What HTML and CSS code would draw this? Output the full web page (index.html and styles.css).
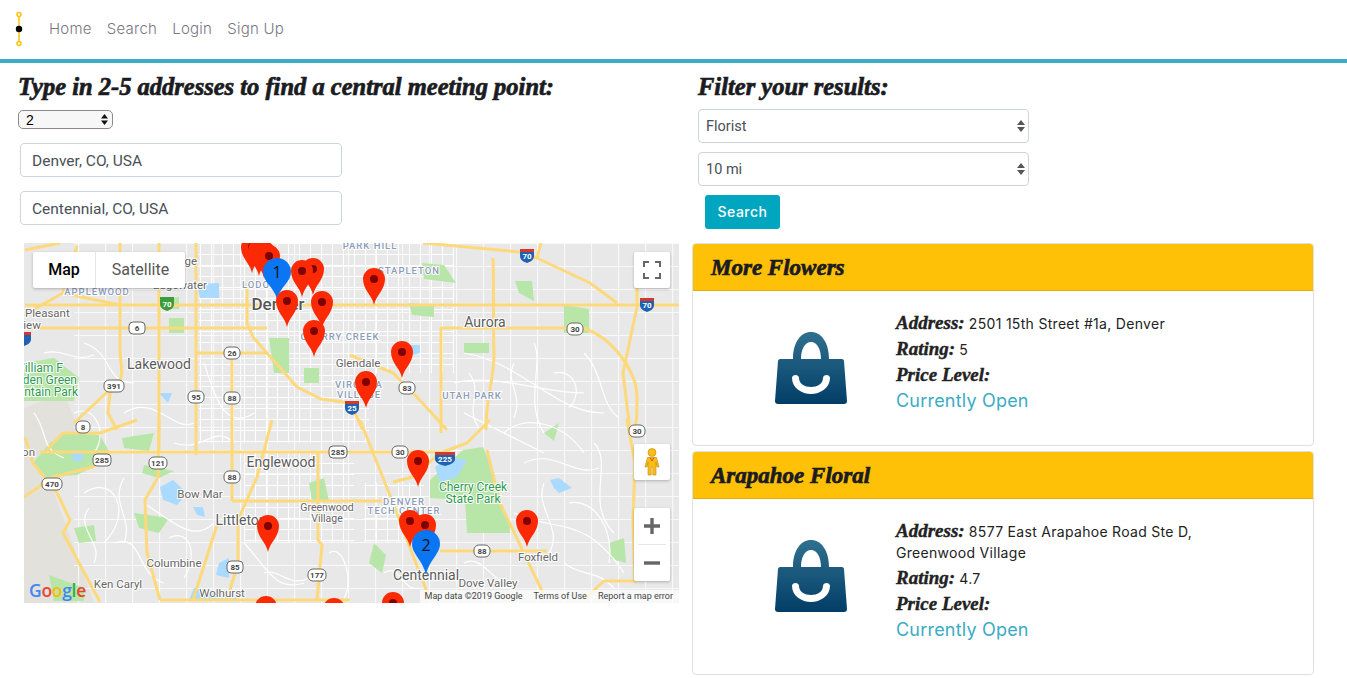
FILE: index.html
```html
<!DOCTYPE html>
<html lang="en">
<head>
<title>Midpoint</title>
<meta charset="utf-8">
<meta name="viewport" content="width=device-width, initial-scale=1">
<link rel="stylesheet" href="styles.css">
</head>
<body>

<header class="topbar">
  <svg class="logo" width="10" height="36" viewBox="0 0 10 36">
    <line x1="5" y1="2" x2="5" y2="34" stroke="#ffc107" stroke-width="1.5"/>
    <circle cx="5" cy="3.5" r="2" fill="#fff" stroke="#ffc107" stroke-width="1.5"/>
    <circle cx="5" cy="32.5" r="2" fill="#fff" stroke="#ffc107" stroke-width="1.5"/>
    <circle cx="5" cy="18" r="3.2" fill="#000"/>
  </svg>
  <nav class="links">
    <a href="#">Home</a>
    <a href="#">Search</a>
    <a href="#">Login</a>
    <a href="#">Sign Up</a>
  </nav>
</header>

<main class="page">
  <section class="left">
    <h2 class="title">Type in 2-5 addresses to find a central meeting point:</h2>
    <div class="count-wrap">
      <select class="count"><option>2</option></select>
      <svg class="arrows" width="7" height="11" viewBox="0 0 7 11"><path d="M3.5 0 7 4.5H0zM3.5 11 0 6.5h7z" fill="#111"/></svg>
    </div>
    <input class="address" type="text" value="Denver, CO, USA">
    <input class="address" type="text" value="Centennial, CO, USA">

    <div class="map">
      <svg class="map-canvas" width="655" height="360" viewBox="0 0 655 360">
        <defs>
          <pattern id="grid-tight" width="11" height="11" patternUnits="userSpaceOnUse">
            <path d="M0 .5H11M.5 0V11" stroke="#fff" stroke-width="1"/>
          </pattern>
          <pattern id="grid-wide" width="27" height="23" patternUnits="userSpaceOnUse">
            <path d="M0 .5H27M.5 0V23" stroke="#fff" stroke-width="1.2" stroke-opacity=".75"/>
          </pattern>
          <path id="pin" d="M0 0C-2-10-11-15-11-26A11 11 0 1 1 11-26C11-15 2-10 0 0Z"/>
          <g id="red-pin">
            <use href="#pin" fill="#fb2a04"/>
            <circle cy="-26" r="4" fill="#7f0000"/>
          </g>
        </defs>

        <rect width="655" height="360" fill="#e8e8e8"/>
        <path d="M0 165 40 150 60 200 30 250 70 360H0Z" fill="#e3e1db"/>
        <rect x="50" y="0" width="605" height="360" fill="url(#grid-wide)"/>
        <rect x="175" y="0" width="170" height="200" fill="url(#grid-tight)"/>
        <rect x="220" y="210" width="110" height="90" fill="url(#grid-tight)"/>
        <rect x="340" y="0" width="90" height="130" fill="url(#grid-tight)"/>
        <rect x="340" y="240" width="60" height="60" fill="url(#grid-tight)"/>

        <g fill="#b8e6a8">
          <path d="M439 207 459 204 466 220 474 257 486 280 486 290 443 290 441 257 406 255 406 237Z"/>
          <path d="M9 220 26 200 43 190 76 192 86 210 69 224 53 232 23 234Z"/>
          <path d="M0 120 30 115 55 135 50 158 0 158Z"/>
          <path d="M140 56 155 54 155 66 140 66Z"/>
          <path d="M145 75 160 75 160 90 145 90Z"/>
          <path d="M245 95 265 95 265 130 250 130Z"/>
          <path d="M280 125 295 125 295 140 280 140Z"/>
          <path d="M385 60 410 62 410 74 388 72Z"/>
          <path d="M491 38 508 38 510 58 495 50Z"/>
          <path d="M540 62 565 66 565 90 540 90Z"/>
          <path d="M440 100 465 100 465 110 440 110Z"/>
          <path d="M398 20 420 22 432 40 400 36Z"/>
          <path d="M98 195 130 190 125 208 100 205Z"/>
          <path d="M120 222 150 228 135 235 118 230Z"/>
          <path d="M50 285 70 282 72 298 55 300Z"/>
          <path d="M110 270 145 275 135 290 115 285Z"/>
          <path d="M25 332 60 345 60 358 30 358Z"/>
          <path d="M350 300 362 312 358 330 345 320Z"/>
          <path d="M585 300 600 295 602 320 585 315Z"/>
          <path d="M520 190 535 180 530 198Z"/>
          <path d="M285 240 300 235 305 258 288 258Z"/>
        </g>
        <g fill="#aadaff">
          <path d="M411 224 426 214 443 217 433 234 416 239Z"/>
          <path d="M136 244 149 237 163 250 153 262 139 257Z"/>
          <path d="M169 264 179 264 181 274 173 272Z"/>
          <path d="M46 210 59 209 59 217 51 219Z"/>
          <path d="M173 41 195 40 195 55 176 55Z"/>
          <path d="M526 237 535 235 548 245 535 250 530 245Z"/>
          <path d="M385 102 396 102 396 110 388 112Z"/>
          <path d="M195 320 205 315 205 335 192 332Z"/>
          <path d="M170 345 205 350 215 357 165 357Z"/>
          <path d="M135 150 148 150 144 160Z"/>
        </g>

        <g class="streets">
          <path d="M440 110C500 120 530 170 580 170M430 140C470 130 520 150 560 150M510 100C520 120 500 160 520 190M480 190C500 170 540 180 560 210M440 170 520 210M570 200C590 220 560 260 590 290M490 270C530 290 560 270 600 330"/>
          <path d="M60 250C90 230 110 270 80 300M120 260C150 280 170 300 190 280M90 300C120 290 110 330 140 340M220 300C240 320 250 350 280 340M60 100C90 110 80 140 110 140M100 170C130 150 150 190 170 180M180 120C190 150 200 190 230 170"/>
          <path d="M50 170C70 160 85 190 70 210M150 200C180 210 190 180 210 200"/>
          <path d="M490 120C480 140 500 150 490 175M530 130C550 125 560 150 545 165M445 130C460 150 440 165 455 185M560 110C580 130 575 160 595 175M500 220C530 205 550 235 575 225M520 240C510 265 540 285 525 310M545 260C570 255 590 285 585 320M540 320C560 335 570 325 590 345M440 320C460 310 470 345 490 340M360 330C375 320 380 350 395 345"/>
          <path d="M20 110C40 105 50 120 70 112M10 170C25 190 15 205 40 215M65 265C50 285 80 300 70 320M100 235C85 260 110 275 100 300M145 295C165 285 175 310 160 335M240 330C255 325 265 345 285 335M305 310C320 300 330 340 320 355"/>
        </g>
        <g class="highways">
          <path d="M1 62H655"/>
          <path d="M1 85H243"/>
          <path d="M135 0V207"/>
          <path d="M172 0V212"/>
          <path d="M208 105V258"/>
          <path d="M96 0V105C96 120 100 130 96 137L86 150 84 170 93 187"/>
          <path d="M469 15C470 50 469 80 470 110C470 140 462 150 462 187"/>
          <path d="M417 190V85H559C590 95 613 130 613 154C613 170 613 180 610 187"/>
          <path d="M223 40V80L229 94 249 117 273 144 297 156 326 160 339 187"/>
          <path d="M326 112 369 130 393 154 423 187"/>
          <path d="M336 177 369 260 406 357"/>
          <path d="M466 177 443 200 416 210 389 234 369 239"/>
          <path d="M463 207 476 260 519 350"/>
          <path d="M16 209H326L416 209"/>
          <path d="M208 258H369"/>
          <path d="M416 308H523"/>
          <path d="M399 0 496 9 513 15 566 40 593 60"/>
          <path d="M517 0 513 15"/>
          <path d="M613 45V64L599 130 606 187 603 177 611 220 609 277 611 340"/>
          <path d="M1 194 9 220 33 250 46 277 39 290 76 359"/>
          <path d="M0 254 29 234 69 224 86 209"/>
          <path d="M23 207 39 190 76 190 113 177"/>
          <path d="M135 177 134 234 121 257 123 310 136 357"/>
          <path d="M248 177 233 234 214 277 214 320 203 357"/>
          <path d="M193 282 169 357"/>
          <path d="M294 209V297L298 302 293 357"/>
          <path d="M136 357H326"/>
          <path d="M173 110H243"/>
          <path d="M39 50 53 3"/>
          <path d="M1 7 36 0"/>
          <path d="M0 72 39 50 96 62"/>
          <path d="M559 357 580 338H610"/>
          <path d="M96 137 50 180"/>
        </g>

        <g class="shields">
          <g transform="translate(113 85)"><rect x="-8" y="-6" width="16" height="12" rx="4"/><text y="3">6</text></g>
          <g transform="translate(208 110)"><rect x="-8" y="-6" width="16" height="12" rx="5"/><text y="3">26</text></g>
          <g transform="translate(90 143)"><rect x="-10" y="-6" width="20" height="12" rx="5"/><text y="3">391</text></g>
          <g transform="translate(172 154)"><rect x="-8" y="-6" width="16" height="12" rx="5"/><text y="3">95</text></g>
          <g transform="translate(208 155)"><rect x="-8" y="-6" width="16" height="12" rx="5"/><text y="3">88</text></g>
          <g transform="translate(59 184)"><rect x="-7" y="-6" width="14" height="12" rx="5"/><text y="3">8</text></g>
          <g transform="translate(551 86)"><rect x="-8" y="-6" width="16" height="12" rx="5"/><text y="3">30</text></g>
          <g transform="translate(383 145)"><rect x="-8" y="-6" width="16" height="12" rx="5"/><text y="3">83</text></g>
          <g transform="translate(613 188)"><rect x="-8" y="-6" width="16" height="12" rx="5"/><text y="3">30</text></g>
          <g transform="translate(78 217)"><rect x="-9" y="-6" width="18" height="12" rx="4"/><text y="3">285</text></g>
          <g transform="translate(134 220)"><rect x="-9" y="-6" width="18" height="12" rx="5"/><text y="3">121</text></g>
          <g transform="translate(28 241)"><rect x="-10" y="-6" width="20" height="12" rx="5"/><text y="3">470</text></g>
          <g transform="translate(208 234)"><rect x="-8" y="-6" width="16" height="12" rx="5"/><text y="3">88</text></g>
          <g transform="translate(314 209)"><rect x="-9" y="-6" width="18" height="12" rx="4"/><text y="3">285</text></g>
          <g transform="translate(211 324)"><rect x="-8" y="-6" width="16" height="12" rx="4"/><text y="3">85</text></g>
          <g transform="translate(293 332)"><rect x="-9" y="-6" width="18" height="12" rx="5"/><text y="3">177</text></g>
          <g transform="translate(376 209)"><rect x="-8" y="-6" width="16" height="12" rx="5"/><text y="3">30</text></g>
          <g transform="translate(458 308)"><rect x="-8" y="-6" width="16" height="12" rx="5"/><text y="3">88</text></g>
        </g>
        <g class="interstates">
          <g transform="translate(503 12)"><path d="M-7-6H7V1C7 5 3 7 0 8C-3 7-7 5-7 1Z" fill="#1f62b0"/><path d="M-7-6H7V-3H-7Z" fill="#d4382c"/><text y="4">70</text></g>
          <g transform="translate(623 61)"><path d="M-7-6H7V1C7 5 3 7 0 8C-3 7-7 5-7 1Z" fill="#1f62b0"/><path d="M-7-6H7V-3H-7Z" fill="#d4382c"/><text y="4">70</text></g>
          <g transform="translate(143 60)"><path d="M-7-6H7V1C7 5 3 7 0 8C-3 7-7 5-7 1Z" fill="#3e9c3a"/><text y="4">70</text></g>
          <g transform="translate(421 215)"><path d="M-10-6H10V1C10 5 4 7 0 8C-4 7-10 5-10 1Z" fill="#1f62b0"/><path d="M-10-6H10V-3H-10Z" fill="#d4382c"/><text y="4">225</text></g>
          <g transform="translate(328 164)"><path d="M-7-6H7V1C7 5 3 7 0 8C-3 7-7 5-7 1Z" fill="#1f62b0"/><path d="M-7-6H7V-3H-7Z" fill="#d4382c"/><text y="4">25</text></g>
          <g transform="translate(0 95)"><path d="M-7-6H7V1C7 5 3 7 0 8C-3 7-7 5-7 1Z" fill="#1f62b0"/><path d="M-7-6H7V-3H-7Z" fill="#d4382c"/></g>
        </g>

        <g class="place">
          <text class="big" x="135" y="126">Lakewood</text>
          <text class="big" x="461" y="84">Aurora</text>
          <text class="city" x="254" y="67">Denver</text>
          <text class="big" x="257" y="224">Englewood</text>
          <text class="big" x="217" y="282">Littleton</text>
          <text class="big" x="402" y="337">Centennial</text>
          <text x="334" y="124">Glendale</text>
          <text class="tight" x="303" y="268">Greenwood</text>
          <text class="tight" x="303" y="279">Village</text>
          <text x="176" y="255">Bow Mar</text>
          <text x="150" y="324">Columbine</text>
          <text x="94" y="345">Ken Caryl</text>
          <text x="198" y="354">Wolhurst</text>
          <text x="464" y="344">Dove Valley</text>
          <text x="514" y="318">Foxfield</text>
          <text class="edge" x="183" y="46">Edgewater</text>
          <text class="edge" x="173" y="22">Wheat Ridge</text>
          <text class="edge" x="11" y="213">Morrison</text>
          <text class="start" x="1" y="74">Pleasant</text>
          <text class="start" x="-8" y="86">View</text>
        </g>
        <g class="park">
          <text x="449" y="248">Cherry Creek</text>
          <text x="449" y="260">State Park</text>
          <text class="edge" x="39" y="129">William F</text>
          <text class="edge" x="53" y="141">Deden Green</text>
          <text class="edge" x="54" y="153">Mountain Park</text>
        </g>
        <g class="hood">
          <text x="346" y="6">PARK HILL</text>
          <text x="385" y="31">STAPLETON</text>
          <text x="448" y="156">UTAH PARK</text>
          <text x="73" y="52">APPLEWOOD</text>
          <text x="316" y="97">CHERRY CREEK</text>
          <text x="380" y="262">DENVER</text>
          <text x="380" y="271">TECH CENTER</text>
          <text x="335" y="145">VIRGINIA</text>
          <text x="335" y="155">VILLAGE</text>
          <text x="232" y="45">LODO</text>
        </g>

        <use href="#red-pin" x="228" y="30"/>
        <use href="#red-pin" x="235" y="33"/>
        <use href="#red-pin" x="240" y="35"/>
        <use href="#red-pin" x="245" y="39"/>
        <use href="#red-pin" x="289" y="52"/>
        <use href="#red-pin" x="278" y="54"/>
        <use href="#red-pin" x="298" y="85"/>
        <use href="#red-pin" x="290" y="114"/>
        <use href="#red-pin" x="350" y="62"/>
        <use href="#red-pin" x="378" y="135"/>
        <use href="#red-pin" x="342" y="165"/>
        <use href="#red-pin" x="394" y="244"/>
        <use href="#red-pin" x="244" y="309"/>
        <use href="#red-pin" x="503" y="304"/>
        <use href="#red-pin" x="386" y="304"/>
        <use href="#red-pin" x="401" y="308"/>
        <use href="#red-pin" x="242" y="390"/>
        <use href="#red-pin" x="310" y="392"/>
        <use href="#red-pin" x="369" y="386"/>

        <g transform="translate(253 56)">
          <path d="M0 0C-3-12-14-17-14-27A14 14 0 1 1 14-27C14-17 3-12 0 0Z" fill="#0a76f2"/>
          <text class="pin-num" y="-21">1</text>
        </g>
        <use href="#red-pin" x="263" y="84"/>
        <g transform="translate(402 332)">
          <path d="M0 0C-3-15-14-21-14-31A14 14 0 1 1 14-31C14-21 3-15 0 0Z" fill="#0a76f2"/>
          <text class="pin-num" y="-24">2</text>
        </g>
      </svg>

      <div class="map-type">
        <button class="type-btn active">Map</button>
        <button class="type-btn">Satellite</button>
      </div>
      <button class="map-ctl fullscreen">
        <svg width="18" height="18" viewBox="0 0 18 18"><path d="M1 6V1H6M12 1H17V6M17 12V17H12M6 17H1V12" fill="none" stroke="#666" stroke-width="2"/></svg>
      </button>
      <button class="map-ctl pegman">
        <svg width="16" height="28" viewBox="0 0 16 28">
          <circle cx="8" cy="4.5" r="4" fill="#fdbd14" stroke="#b98a10" stroke-width=".6"/>
          <path d="M3.5 9.5H12.5L15 19H13L12 14V27H8.8V19H7.2V27H4V14L3 19H1Z" fill="#fdbd14" stroke="#b98a10" stroke-width=".6"/>
          <path d="M6 9.5 8 13 10 9.5" fill="none" stroke="#d2521c" stroke-width="1"/>
        </svg>
      </button>
      <div class="zoom-ctl">
        <button class="zoom-btn"><svg width="18" height="18" viewBox="0 0 18 18"><path d="M9 1V17M1 9H17" stroke="#666" stroke-width="3.4"/></svg></button>
        <span class="zoom-line"></span>
        <button class="zoom-btn"><svg width="18" height="18" viewBox="0 0 18 18"><path d="M1 9H17" stroke="#666" stroke-width="3.4"/></svg></button>
      </div>
      <div class="google"><b class="g-blue">G</b><b class="g-red">o</b><b class="g-yellow">o</b><b class="g-blue">g</b><b class="g-green">l</b><b class="g-red">e</b></div>
      <div class="attrib">
        <span>Map data ©2019 Google</span>
        <span>Terms of Use</span>
        <span>Report a map error</span>
      </div>
    </div>
  </section>

  <section class="right">
    <h2 class="title filter-title">Filter your results:</h2>
    <div class="filter-wrap">
      <select class="filter"><option>Florist</option></select>
      <svg class="arrows big-arrows" width="8" height="12" viewBox="0 0 8 12"><path d="M4 0 8 5H0zM4 12 0 7h8z" fill="#555"/></svg>
    </div>
    <div class="filter-wrap">
      <select class="filter"><option>10 mi</option></select>
      <svg class="arrows big-arrows" width="8" height="12" viewBox="0 0 8 12"><path d="M4 0 8 5H0zM4 12 0 7h8z" fill="#555"/></svg>
    </div>
    <button class="search-btn">Search</button>

    <div class="card">
      <div class="card-head">More Flowers</div>
      <div class="card-body">
        <div class="card-icon">
          <svg width="72" height="72" viewBox="0 0 72 72">
            <defs>
              <linearGradient id="bag" x1="0" y1="0" x2="0" y2="1">
                <stop offset="0" stop-color="#30708f"/>
                <stop offset="1" stop-color="#023d66"/>
              </linearGradient>
            </defs>
            <path fill="url(#bag)" fill-rule="evenodd" d="M18 27C18 10 26 0 36 0S54 10 54 27H67C68 27 69 28 69 29L72 69C72 71 71 72 69 72H3C1 72 0 71 0 69L3 29C3 28 4 27 5 27ZM26 27H46C46 17 42 10 36 10S26 17 26 27ZM17 46C17 56 27 62 36 62S55 56 55 46C55 42 48 42 48 46C48 52 42 55 36 55S24 52 24 46C24 42 17 42 17 46Z"/>
          </svg>
        </div>
        <div class="card-info">
          <p class="line"><b class="label">Address:</b> 2501 15th Street #1a, Denver</p>
          <p class="line"><b class="label">Rating:</b> 5</p>
          <p class="line"><b class="label">Price Level:</b></p>
          <p class="open">Currently Open</p>
        </div>
      </div>
    </div>

    <div class="card">
      <div class="card-head">Arapahoe Floral</div>
      <div class="card-body">
        <div class="card-icon">
          <svg width="72" height="72" viewBox="0 0 72 72">
            <path fill="url(#bag)" fill-rule="evenodd" d="M18 27C18 10 26 0 36 0S54 10 54 27H67C68 27 69 28 69 29L72 69C72 71 71 72 69 72H3C1 72 0 71 0 69L3 29C3 28 4 27 5 27ZM26 27H46C46 17 42 10 36 10S26 17 26 27ZM17 46C17 56 27 62 36 62S55 56 55 46C55 42 48 42 48 46C48 52 42 55 36 55S24 52 24 46C24 42 17 42 17 46Z"/>
          </svg>
        </div>
        <div class="card-info">
          <p class="line"><b class="label">Address:</b> 8577 East Arapahoe Road Ste D, Greenwood Village</p>
          <p class="line"><b class="label">Rating:</b> 4.7</p>
          <p class="line"><b class="label">Price Level:</b></p>
          <p class="open">Currently Open</p>
        </div>
      </div>
    </div>
  </section>
</main>

</body>
</html>
```

FILE: styles.css
```css
* {
  box-sizing: border-box;
}

body {
  margin: 0;
  font-family: Inter, "Open Sans", sans-serif;
  color: #212529;
  background: #fff;
}

/* Top bar */
.topbar {
  display: flex;
  align-items: center;
  height: 63px;
  padding: 0 0 2px 14px;
  border-bottom: 4px solid #3aacc4;
}

.logo {
  margin-right: 25px;
}

.links {
  display: flex;
  gap: 15px;
}

.links a {
  color: #77777f;
  font-size: 15px;
  font-weight: 300;
  letter-spacing: .25px;
  text-decoration: none;
}

/* Two columns */
.page {
  display: flex;
}

.left {
  width: 692px;
  padding-left: 18px;
}

.right {
  width: 622px;
}

.title {
  margin: 11px 0 0;
  height: 26px;
  font-family: "Liberation Serif", serif;
  font-size: 24.5px;
  line-height: 26px;
  font-style: italic;
  font-weight: 700;
  color: #1b1b22;
  -webkit-text-stroke: .7px #1b1b22;
  white-space: nowrap;
}

.count-wrap {
  position: relative;
  width: 95px;
  margin-top: 10px;
}

.count {
  display: block;
  appearance: none;
  width: 95px;
  height: 19px;
  padding: 0 0 0 7px;
  border: 1px solid #8a8a8a;
  border-radius: 5px;
  background: #f7f7f7;
  font-family: "Liberation Sans", sans-serif;
  font-size: 14px;
  color: #000;
}

.arrows {
  position: absolute;
  right: 5px;
  top: 4px;
}

.address {
  display: block;
  width: 322px;
  height: 34px;
  margin: 14px 0 0 2px;
  padding: 1px 11px 0;
  border: 1px solid #ced4da;
  border-radius: 4px;
  font-family: Roboto, sans-serif;
  font-size: 15.5px;
  color: #495057;
}

.address + .address {
  margin-top: 14px;
}

/* Map */
.map {
  position: relative;
  width: 655px;
  height: 360px;
  margin: 18px 0 0 6px;
  overflow: hidden;
}

.map-canvas {
  display: block;
}

.streets {
  fill: none;
  stroke: #fff;
  stroke-width: 1.2;
}

.highways {
  fill: none;
  stroke: #fdd97b;
  stroke-width: 3;
  stroke-linejoin: round;
}

.shields rect {
  fill: #fff;
  stroke: #666;
  stroke-width: 1;
}

.shields text {
  font: 700 8px Roboto, sans-serif;
  fill: #444;
  text-anchor: middle;
}

.interstates text {
  font: 700 8px Roboto, sans-serif;
  fill: #fff;
  text-anchor: middle;
}

.place text,
.park text,
.hood text {
  font-family: Roboto, sans-serif;
  text-anchor: middle;
  stroke: #fff;
  stroke-width: 2;
  paint-order: stroke;
}

.place text {
  font-size: 11.5px;
  fill: #666;
}

.place .tight {
  font-size: 10.5px;
}

.place .big {
  font-size: 14px;
  fill: #5b5b5b;
}

.place .city {
  font-size: 17px;
  font-weight: 500;
  fill: #555;
}

.place .edge,
.park .edge {
  text-anchor: end;
}

.place .start {
  text-anchor: start;
}

.park text {
  font-size: 12px;
  fill: #2d9a4e;
}

.hood text {
  font-size: 9.5px;
  font-weight: 500;
  letter-spacing: 1px;
  fill: #8b9bb8;
}

.pin-num {
  font: 16px "Open Sans", sans-serif;
  fill: #111;
  text-anchor: middle;
}

.map-type {
  position: absolute;
  left: 9px;
  top: 9px;
  display: flex;
  height: 36px;
  background: #fff;
  box-shadow: 0 1px 3px rgba(0, 0, 0, .25);
  border-radius: 2px;
}

.type-btn {
  height: 36px;
  padding: 0 0 2px;
  border: 0;
  background: none;
  font-family: Roboto, sans-serif;
  font-size: 16px;
  color: #565656;
  width: 89px;
}

.type-btn.active {
  width: 63px;
  color: #000;
  font-weight: 500;
  border-right: 1px solid #e6e6e6;
}

.map-ctl {
  position: absolute;
  left: 610px;
  display: flex;
  align-items: center;
  justify-content: center;
  width: 36px;
  height: 36px;
  padding: 0;
  border: 0;
  border-radius: 2px;
  background: #fff;
  box-shadow: 0 1px 3px rgba(0, 0, 0, .25);
}

.fullscreen {
  top: 9px;
}

.pegman {
  top: 201px;
}

.zoom-ctl {
  position: absolute;
  left: 610px;
  top: 265px;
  width: 36px;
  height: 73px;
  background: #fff;
  border-radius: 2px;
  box-shadow: 0 1px 3px rgba(0, 0, 0, .25);
}

.zoom-btn {
  display: flex;
  align-items: center;
  justify-content: center;
  width: 36px;
  height: 36px;
  padding: 0;
  border: 0;
  background: none;
}

.zoom-line {
  display: block;
  width: 28px;
  height: 1px;
  margin: 0 4px;
  background: #e6e6e6;
}

.google {
  position: absolute;
  left: 5px;
  bottom: 3px;
  font-family: "Open Sans", sans-serif;
  font-size: 17.5px;
  line-height: 20px;
  letter-spacing: -.3px;
}

.google b {
  font-weight: 600;
}

.g-blue { color: #4285f4; }
.g-red { color: #ea4335; }
.g-yellow { color: #fbbc05; }
.g-green { color: #34a853; }

.attrib {
  position: absolute;
  right: 0;
  bottom: 0;
  display: flex;
  height: 13px;
  font-family: Roboto, sans-serif;
  font-size: 9px;
  line-height: 13px;
  color: #444;
}

.attrib span {
  padding: 0 6px 0 5px;
  background: rgba(255, 255, 255, .7);
}

/* Filters */
.filter-title {
  margin-left: 6px;
}

.filter-wrap {
  position: relative;
  width: 331px;
  margin: 9px 0 0 6px;
}

.filter-wrap + .filter-wrap {
  margin-top: 9px;
}

.filter {
  display: block;
  appearance: none;
  width: 331px;
  height: 34px;
  padding: 0 7px;
  border: 1px solid #ced4da;
  border-radius: 4px;
  background: #fff;
  font-family: Roboto, sans-serif;
  font-size: 14.5px;
  color: #495057;
}

.big-arrows {
  right: 4px;
  top: 11px;
}

.search-btn {
  display: block;
  width: 75px;
  height: 34px;
  margin: 9px 0 14px 13px;
  padding: 0 0 2px;
  border: 0;
  border-radius: 3px;
  background: #00a5bf;
  color: #fff;
  font-family: Inter, sans-serif;
  font-size: 14px;
  font-weight: 500;
  letter-spacing: .5px;
}

/* Result cards */
.card {
  margin-bottom: 5px;
  border: 1px solid #dfdfdf;
  border-radius: 4px;
  overflow: hidden;
}

.card-head {
  height: 47px;
  padding: 0 18px;
  background: #ffc107;
  border-bottom: 1px solid #e5ad06;
  font-family: "Liberation Serif", serif;
  font-size: 23px;
  line-height: 47px;
  font-style: italic;
  font-weight: 700;
  color: #1b1b22;
  -webkit-text-stroke: .7px #1b1b22;
}

.card-body {
  display: flex;
  padding: 22px 70px 34px 0;
}

.card-icon {
  flex: none;
  width: 203px;
  padding: 19px 0 0 82px;
}

.card-info {
  flex: 1;
}

.line {
  margin: 0 0 5px;
  font-size: 14px;
  line-height: 21px;
  font-weight: 400;
  color: #222;
  letter-spacing: .3px;
}

.label {
  font-family: "Liberation Serif", serif;
  font-size: 19px;
  line-height: 1;
  font-style: italic;
  font-weight: 700;
  letter-spacing: 0;
  -webkit-text-stroke: .4px #222;
}

.open {
  margin: 0;
  color: #3aacc4;
  font-size: 18px;
  line-height: 20px;
  letter-spacing: .2px;
}
```
